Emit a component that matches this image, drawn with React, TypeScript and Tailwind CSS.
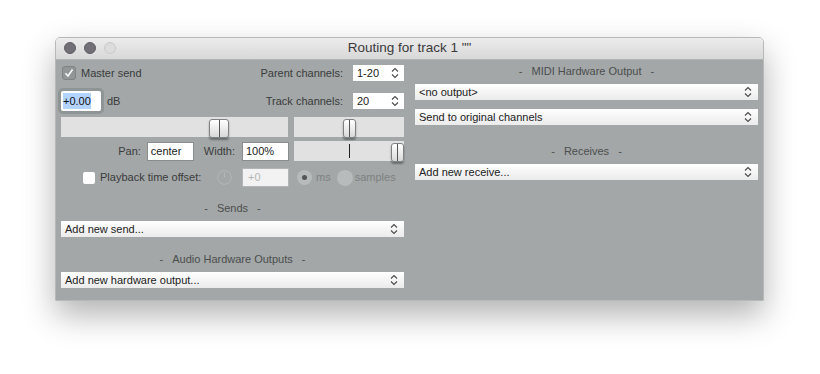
import type { ReactNode } from 'react'

const font = { fontFamily: '"Liberation Sans", Arial, sans-serif' }

function Chevrons() {
  return (
    <svg width="8" height="12" viewBox="0 0 8 12" className="shrink-0">
      <path d="M1 4.5 L4 1.5 L7 4.5" fill="none" stroke="#4a4a4a" strokeWidth="1.1" />
      <path d="M1 7.5 L4 10.5 L7 7.5" fill="none" stroke="#4a4a4a" strokeWidth="1.1" />
    </svg>
  )
}

function Dropdown({ label, className = '' }: { label: string; className?: string }) {
  return (
    <div
      className={`flex h-[16px] items-center justify-between bg-linear-to-b from-white to-[#ebebeb] pl-[4px] pr-[6px] text-[11px] text-[#222] ${className}`}
    >
      <span>{label}</span>
      <Chevrons />
    </div>
  )
}

function Heading({ children, className = '' }: { children: ReactNode; className?: string }) {
  return (
    <div
      className={`flex h-[14px] items-center justify-center gap-[9px] text-[11px] text-[#4b4e4e] ${className}`}
    >
      <span>-</span>
      <span>{children}</span>
      <span>-</span>
    </div>
  )
}

function Thumb({ left, width }: { left: number; width: number }) {
  return (
    <div
      className="absolute top-[2px] flex h-[19px] justify-center rounded-[3px] border border-[#7e8282] bg-linear-to-b from-white to-[#d9d9d9] shadow-[0_2px_2px_rgba(0,0,0,0.35)]"
      style={{ left, width }}
    >
      <div className="h-full w-px bg-[#555]" />
    </div>
  )
}

function Slider({ width, thumb, thumbW, center }: { width: number; thumb: number; thumbW: number; center?: number }) {
  return (
    <div className="relative h-[20px] bg-[#e1e1e1]" style={{ width }}>
      {center !== undefined && (
        <div className="absolute top-[3px] h-[14px] w-px bg-[#222]" style={{ left: center }} />
      )}
      <Thumb left={thumb} width={thumbW} />
    </div>
  )
}

function SmallSelect({ value }: { value: string }) {
  return (
    <div className="flex h-[16px] w-[51px] items-center justify-between bg-white pl-[4px] pr-[5px] text-[11px] text-[#222]">
      <span>{value}</span>
      <Chevrons />
    </div>
  )
}

export default function App() {
  return (
    <div className="h-[374px] w-[820px] bg-white pl-[55px] pt-[37px]" style={font}>
      <div className="flex h-[264px] w-[709px] flex-col overflow-hidden rounded-t-[5px] border border-[#b8b8b8] shadow-[0_14px_32px_rgba(0,0,0,0.3)]">
        <div className="relative flex h-[22px] shrink-0 items-center justify-center border-b border-[#b2b2b2] bg-linear-to-b from-[#ececec] to-[#d8d8d8]">
          <div className="absolute left-[8px] top-[4px] flex gap-[8px]">
            <div className="h-[12px] w-[12px] rounded-full border border-[#5f5d63] bg-[#726f76]" />
            <div className="h-[12px] w-[12px] rounded-full border border-[#5f5d63] bg-[#726f76]" />
            <div className="h-[12px] w-[12px] rounded-full border border-[#c9c9c9] bg-[#dcdcdc]" />
          </div>
          <span className="text-[13.5px] text-[#3a3a3a]">Routing for track 1 ""</span>
        </div>

        <div className="flex flex-1 gap-[11px] bg-[#a3a7a7] px-[5px] text-[11px] text-[#3a3c3c]">
          {/* left column */}
          <div className="flex w-[343px] flex-col pt-[5px]">
            <div className="flex h-[16px] items-center justify-between">
              <div className="flex items-center">
                <div className="ml-[1px] flex h-[14px] w-[14px] items-center justify-center rounded-[3px] border border-[#7f8383] bg-[#929696]">
                  <svg width="10" height="10" viewBox="0 0 10 10">
                    <path d="M1.5 5.2 L4 8 L8.5 1.5" fill="none" stroke="#fff" strokeWidth="1.4" />
                  </svg>
                </div>
                <span className="ml-[5px]">Master send</span>
              </div>
              <div className="flex items-center">
                <span>Parent channels:</span>
                <div className="ml-[10px]">
                  <SmallSelect value="1-20" />
                </div>
              </div>
            </div>

            <div className="mt-[10px] flex h-[20px] items-center justify-between">
              <div className="flex items-center">
                <div className="flex h-[20px] w-[40px] items-center rounded-[2px] bg-white pl-[2px] shadow-[0_0_0_3px_#8f9494]">
                  <span className="bg-[#b3d4ff] text-[#111]">+0.00</span>
                </div>
                <span className="ml-[6px]">dB</span>
              </div>
              <div className="flex items-center">
                <span>Track channels:</span>
                <div className="ml-[10px]">
                  <SmallSelect value="20" />
                </div>
              </div>
            </div>

            <div className="mt-[6px] flex gap-[6px]">
              <Slider width={227} thumb={148} thumbW={20} />
              <Slider width={110} thumb={49} thumbW={13} />
            </div>

            <div className="mt-[4px] flex h-[20px] items-center">
              <div className="flex w-[228px] items-center justify-end">
                <span>Pan:</span>
                <div className="ml-[6px] flex h-[19px] w-[47px] items-center border border-[#8a8d8d] bg-white pl-[3px] text-[#222]">
                  center
                </div>
                <span className="ml-[10px]">Width:</span>
                <div className="ml-[7px] flex h-[19px] w-[47px] items-center border border-[#8a8d8d] bg-white pl-[3px] text-[#222]">
                  100%
                </div>
              </div>
              <div className="ml-[5px]">
                <Slider width={110} thumb={97} thumbW={13} center={55} />
              </div>
            </div>

            <div className="mt-[7px] flex h-[19px] items-center">
              <div className="flex w-[181px] items-center">
                <div className="ml-[22px] h-[12px] w-[12px] rounded-[2px] bg-white" />
                <span className="ml-[5px]">Playback time offset:</span>
                <svg width="15" height="15" viewBox="0 0 15 15" className="ml-auto mr-[10px]">
                  <circle cx="7.5" cy="7.5" r="6.8" fill="none" stroke="#b3b7b7" strokeWidth="1" />
                  <path d="M7.5 7.5 V2.5" stroke="#b3b7b7" strokeWidth="1" />
                </svg>
              </div>
              <div className="flex h-[19px] w-[47px] items-center border border-[#b2b5b5] bg-[#f2f2f2] pl-[5px] text-[#b4b6b6]">
                +0
              </div>
              <div className="ml-[8px] flex h-[15px] w-[15px] items-center justify-center rounded-full bg-[#b8bbbb]">
                <div className="h-[5px] w-[5px] rounded-full bg-[#555]" />
              </div>
              <span className="ml-[4px] text-[#7d8282]">ms</span>
              <div className="ml-[6px] h-[16px] w-[16px] rounded-full bg-[#b8bbbb]" />
              <span className="ml-[2px] text-[#7d8282]">samples</span>
            </div>

            <Heading className="mt-[14px]">Sends</Heading>
            <Dropdown label="Add new send..." className="mt-[6px]" />
            <Heading className="mt-[15px]">Audio Hardware Outputs</Heading>
            <Dropdown label="Add new hardware output..." className="mt-[6px]" />
          </div>

          {/* right column */}
          <div className="flex w-[343px] flex-col pt-[4px]">
            <Heading>MIDI Hardware Output</Heading>
            <Dropdown label="<no output>" className="mt-[6px]" />
            <Dropdown label="Send to original channels" className="mt-[9px]" />
            <Heading className="mt-[19px]">Receives</Heading>
            <Dropdown label="Add new receive..." className="mt-[6px]" />
          </div>
        </div>
      </div>
    </div>
  )
}
